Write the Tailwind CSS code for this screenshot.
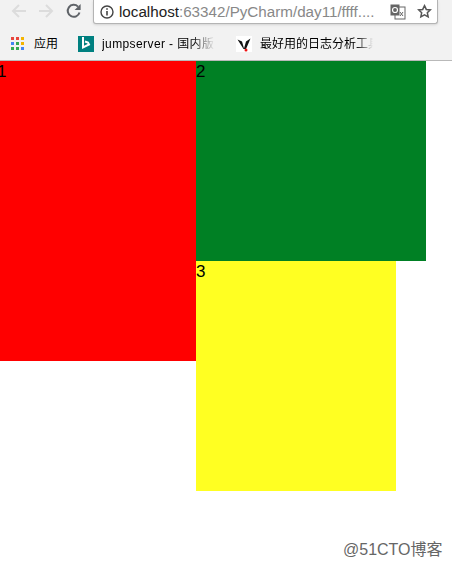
<!DOCTYPE html>
<html lang="zh-CN">
<head>
    <meta charset="UTF-8">
    <title>localhost</title>
    <script src="https://cdn.jsdelivr.net/npm/@tailwindcss/browser@4"></script>
</head>
<body class="relative w-[452px] h-[568px] overflow-hidden bg-white font-['Liberation_Sans','Noto_Sans_CJK_SC',sans-serif]">

    <!-- Browser toolbar -->
    <div class="h-[24px] bg-[#f2f2f2] flex items-start">
        <div class="w-[93px] h-[24px] flex items-center pl-[10px] pb-[2px] gap-[11px]">
            <svg width="17" height="16" viewBox="0 0 17 16" fill="none" stroke="#dcdcdc" stroke-width="2"><path d="M16 8H3M9 2L3 8l6 6"/></svg>
            <svg width="17" height="16" viewBox="0 0 17 16" fill="none" stroke="#dcdcdc" stroke-width="2"><path d="M1 8h13M8 2l6 6-6 6"/></svg>
            <svg width="16" height="16" viewBox="0 0 16 16" fill="none" stroke="#5f6368" stroke-width="2"><path d="M13.5 9.500A6 6 0 1 1 12 3.600"/><path d="M14.600 1v6h-6z" fill="#5f6368" stroke="none"/></svg>
        </div>
        <div class="w-[345px] h-[24px] bg-white border border-t-0 border-[#b4b4b4] rounded-b-[3px] flex items-center pl-[6px] pr-[5px] shadow-sm">
            <svg width="14" height="14" viewBox="0 0 14 14" fill="none" class="shrink-0"><circle cx="7" cy="7" r="6" stroke="#444" stroke-width="1.400"/><path d="M7 6v4.500M7 3.300v1.500" stroke="#444" stroke-width="1.600"/></svg>
            <div class="ml-[5px] text-[15.200px] leading-[20px] whitespace-nowrap w-[274px] overflow-hidden"><span class="text-[#222]">localhost</span><span class="text-[#888]">:63342/PyCharm/day11/ffff....</span></div>
            <svg width="16" height="16" viewBox="0 0 16 16" class="shrink-0 ml-auto"><rect x="5" y="3" width="10" height="12" fill="#fff" stroke="#666"/><rect x="0.500" y="0.500" width="9" height="11" fill="#666"/><circle cx="5" cy="6" r="2.500" fill="none" stroke="#fff" stroke-width="1.200"/><path d="M10 8l3 4M13 8l-3 4" stroke="#666"/></svg>
            <svg width="15" height="15" viewBox="0 0 16 16" class="shrink-0 ml-[11px]" fill="none" stroke="#555" stroke-width="1.600"><path d="M8 1.800l1.900 4 4.300.5-3.200 3 .9 4.400L8 11.500l-3.900 2.200.9-4.400-3.200-3 4.300-.5z"/></svg>
        </div>
    </div>

    <!-- Bookmarks bar -->
    <div class="h-[37px] bg-[#f2f2f2] border-b border-[#b9b9b9] flex items-center pt-[3px] text-[12px] text-black">
        <div class="ml-[11px] grid grid-cols-3 gap-[2px] w-[13px] h-[13px]">
            <span class="bg-[#e8453c]"></span><span class="bg-[#e8453c]"></span><span class="bg-[#f4b400]"></span>
            <span class="bg-[#4285f4]"></span><span class="bg-[#34a853]"></span><span class="bg-[#f4b400]"></span>
            <span class="bg-[#34a853]"></span><span class="bg-[#34a853]"></span><span class="bg-[#4285f4]"></span>
        </div>
        <span class="ml-[10px] w-[44px]">应用</span>
        <div class="w-[16px] h-[16px] bg-[#008080] flex items-center justify-center shrink-0">
            <svg width="10" height="13" viewBox="0 0 10 13" fill="none" stroke="#fff" stroke-width="2"><path d="M2 0v10.500l6-3-1-2-3-1"/></svg>
        </div>
        <span class="ml-[8px] w-[113px] overflow-hidden whitespace-nowrap tracking-[0.4px] [mask-image:linear-gradient(to_right,black_80%,transparent)]">jumpserver - 国内版</span>
        <div class="ml-[21px] w-[16px] h-[16px] bg-white flex items-center justify-center shrink-0">
            <svg width="16" height="16" viewBox="0 0 16 16" fill="none"><path d="M1.500 3.500L6 5.500l2 7 2-7 4.500-3L10 13H7.500z" fill="#111"/><circle cx="10" cy="14" r="1.500" fill="#e11"/></svg>
        </div>
        <span class="ml-[8px] w-[113px] overflow-hidden whitespace-nowrap [mask-image:linear-gradient(to_right,black_85%,transparent)]">最好用的日志分析工具</span>
    </div>

    <!-- Page content -->
    <div class="flex items-start text-[17px] leading-[22px] text-black">
        <div class="w-[196px] h-[300px] bg-[#ff0000] -indent-[3px]">1</div>
        <div>
            <div class="w-[230px] h-[200px] bg-[#008024]">2</div>
            <div class="w-[200px] h-[230px] bg-[#ffff22]">3</div>
        </div>
    </div>

    <!-- Watermark -->
    <div class="absolute left-[343px] top-[541px] text-[16px] leading-[18px] text-[#666] whitespace-nowrap">@51CTO博客</div>
</body>
</html>
